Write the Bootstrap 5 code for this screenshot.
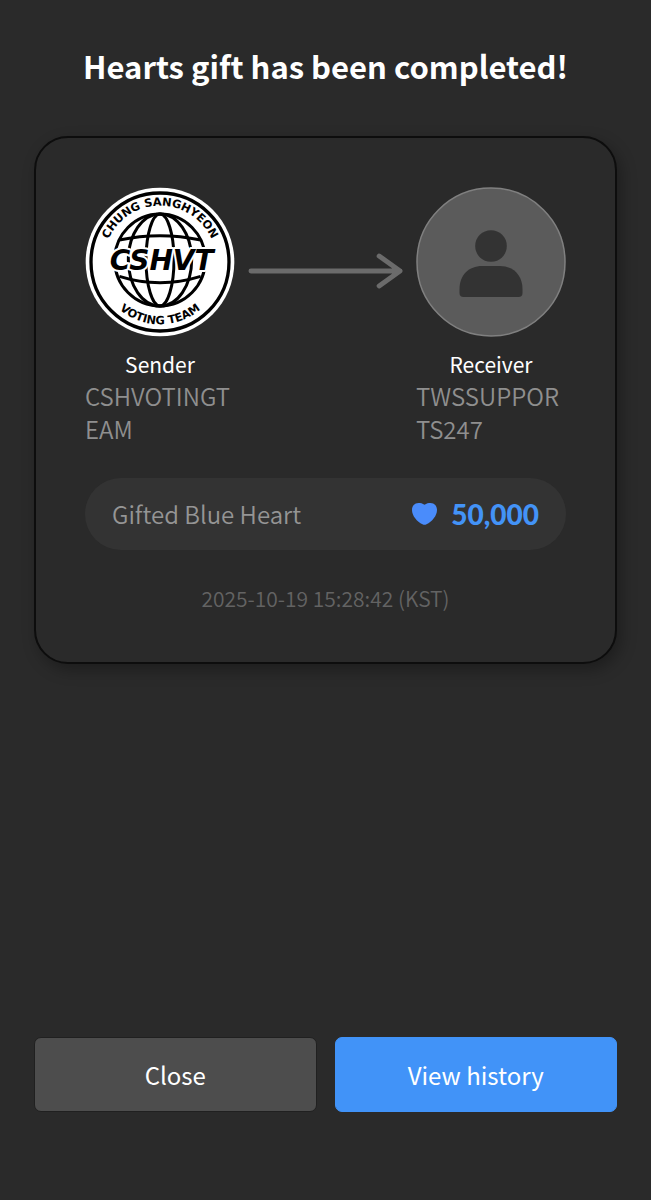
<!DOCTYPE html>
<html lang="en">
<head>
<meta charset="utf-8">
<meta name="viewport" content="width=device-width, initial-scale=1">
<title>Hearts gift</title>
<link href="https://cdn.jsdelivr.net/npm/bootstrap@5.3.0/dist/css/bootstrap.min.css" rel="stylesheet">
<style>
  body { background: #2a2a2a; color: #fff; font-family: "Noto Sans CJK KR", "Noto Sans", sans-serif; }
  .gift-page { padding: 42px 34px 88px; }
  .gift-title { font-size: 31px; line-height: 48px; margin-bottom: 46px; }
  .gift-card { background: #2a2a2a; border: 2px solid #0d0d0d; border-radius: 34px; padding: 49px 49px 48px; color: #fff; box-shadow: 4px 6px 16px rgba(0, 0, 0, .3); }
  .person { width: 150px; }
  .avatar { width: 150px; height: 150px; }
  .role { font-size: 21px; line-height: 29px; margin-top: 13px; }
  .user-id { font-size: 24px; line-height: 33px; color: #8f8f8f; font-weight: 350; word-break: break-all; }
  .arrow { height: 38px; margin: 65px 13px 0; }
  .gift-row { background: #333; padding: 0 27px; height: 72px; margin-top: 33px; }
  .gift-label { font-size: 24px; color: #959595; font-weight: 350; }
  .gift-count { font-family: Lato, sans-serif; font-weight: 900; font-size: 28px; line-height: 32px; color: #4393f7; }
  .heart-count { gap: 14px; }
  .gift-time { font-size: 21px; line-height: 32px; margin-top: 32px; color: #636363; font-weight: 350; }
  .actions { gap: 18px; }
  .action { height: 75px; font-size: 24px; border-radius: 7px; color: #fff; }
  .btn-quiet { --bs-btn-bg: #4d4d4d; --bs-btn-border-color: #202020; --bs-btn-hover-bg: #595959; }
  .btn-blue { --bs-btn-bg: #4193f8; --bs-btn-border-color: #4193f8; --bs-btn-hover-bg: #5aa1f9; }
</style>
</head>
<body>
<main class="gift-page d-flex flex-column min-vh-100">
  <h1 class="gift-title text-center fw-bold">Hearts gift has been completed!</h1>
  <section class="card gift-card">
    <div class="d-flex">
      <div class="person flex-shrink-0">
        <svg class="avatar d-block" viewBox="0 0 450 450" role="img" aria-label="Sender logo">
          <defs>
            <path id="arcTop" d="M56 225a169 169 0 0 1 338 0"/>
            <path id="arcBottom" d="M38 225a187 187 0 0 0 374 0"/>
          </defs>
          <circle cx="225" cy="225" r="223" fill="#fff"/>
          <circle cx="225" cy="225" r="207" fill="none" stroke="#000" stroke-width="10"/>
          <g fill="none" stroke="#000" stroke-width="9">
            <ellipse cx="225" cy="219" rx="136" ry="138"/>
            <ellipse cx="225" cy="219" rx="95" ry="138"/>
            <ellipse cx="225" cy="219" rx="42" ry="138"/>
            <path d="M103 159q122-26 244 0M103 268q122 38 244 0"/>
          </g>
          <g font-family="DejaVu Sans, sans-serif" font-weight="700" fill="#000" text-anchor="middle">
            <text font-size="34"><textPath href="#arcTop" startOffset="50%">CHUNG SANGHYEON</textPath></text>
            <text font-size="34"><textPath href="#arcBottom" startOffset="50%">VOTING TEAM</textPath></text>
            <text x="230" y="249" font-size="84" font-style="italic" stroke="#fff" stroke-width="12" paint-order="stroke" stroke-linejoin="round">CSHVT</text>
          </g>
        </svg>
        <div class="role text-center">Sender</div>
        <div class="user-id">CSHVOTINGTEAM</div>
      </div>
      <div class="arrow flex-fill d-flex align-items-center">
        <svg class="w-100" height="38" viewBox="0 0 156 38" fill="none" stroke="#6b6b6b" stroke-width="5" stroke-linecap="round" stroke-linejoin="round" aria-hidden="true">
          <path d="M3 19h150M132 4l21 15-21 15"/>
        </svg>
      </div>
      <div class="person flex-shrink-0">
        <svg class="avatar d-block" viewBox="0 0 150 150" role="img" aria-label="Receiver">
          <circle cx="75" cy="75" r="74" fill="#5b5b5b" stroke="#808080" stroke-width="1.5"/>
          <circle cx="75" cy="59" r="15.8" fill="#333"/>
          <path d="M66 79h18c13 0 22.500 9 22.500 23v4q0 4-4 4h-55q-4 0-4-4v-4c0-14 9.500-23 22.500-23z" fill="#333"/>
        </svg>
        <div class="role text-center">Receiver</div>
        <div class="user-id">TWSSUPPORTS247</div>
      </div>
    </div>
    <div class="gift-row rounded-pill d-flex align-items-center justify-content-between">
      <span class="gift-label">Gifted Blue Heart</span>
      <span class="heart-count d-flex align-items-center">
        <svg width="25" height="22" viewBox="0 0 25 22" aria-hidden="true"><path fill="#4a8cfb" d="M12.500 1.800C10.500.3 8.500 0 6.500 0 2.500 0 0 3 0 7c0 6 5 11.500 10.500 14.300q2 1 4 0C20 18.500 25 13 25 7c0-4-2.500-7-6.500-7-2 0-4 .3-6 1.800z"/></svg>
        <span class="gift-count">50,000</span>
      </span>
    </div>
    <div class="gift-time text-center">2025-10-19 15:28:42 (KST)</div>
  </section>
  <div class="actions d-flex mt-auto">
    <button type="button" class="btn btn-quiet action flex-fill w-50">Close</button>
    <button type="button" class="btn btn-blue action flex-fill w-50">View history</button>
  </div>
</main>
<script src="https://cdn.jsdelivr.net/npm/bootstrap@5.3.0/dist/js/bootstrap.bundle.min.js"></script>
</body>
</html>
